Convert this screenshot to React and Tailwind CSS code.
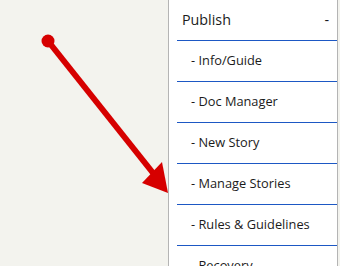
import React from 'react';

const items = ['Info/Guide', 'Doc Manager', 'New Story', 'Manage Stories', 'Rules & Guidelines', 'Recovery'];

function Arrow() {
  return (
    <svg className="absolute left-0 top-0" width="340" height="266" viewBox="0 0 340 266">
      <circle cx="48" cy="41" r="6.5" fill="#d60000" />
      <line x1="48" y1="41" x2="157" y2="178" stroke="#d60000" strokeWidth="6" />
      <polygon points="168,193 142,183 162,162" fill="#d60000" />
    </svg>
  );
}

export default function App() {
  return (
    <div className="relative flex h-[266px] w-[340px] overflow-hidden bg-[#f3f3ee] font-['Open_Sans',sans-serif] text-[#1b1b1b]">
      <div className="flex-1" />
      <div className="mr-[2px] h-full w-[170px] border-x border-[#b4b4b4] bg-white pl-[8px]">
        <div className="flex h-[41px] items-center justify-between border-b border-[#1d58c4] pl-[5px] pr-[8px] text-[14.3px]">
          <span>Publish</span>
          <span>-</span>
        </div>
        {items.map(item => (
          <div key={item} className="flex h-[41px] items-center border-b border-[#1d58c4] pl-[14px] text-[12.8px]">
            - {item}
          </div>
        ))}
      </div>
      <Arrow />
    </div>
  );
}
